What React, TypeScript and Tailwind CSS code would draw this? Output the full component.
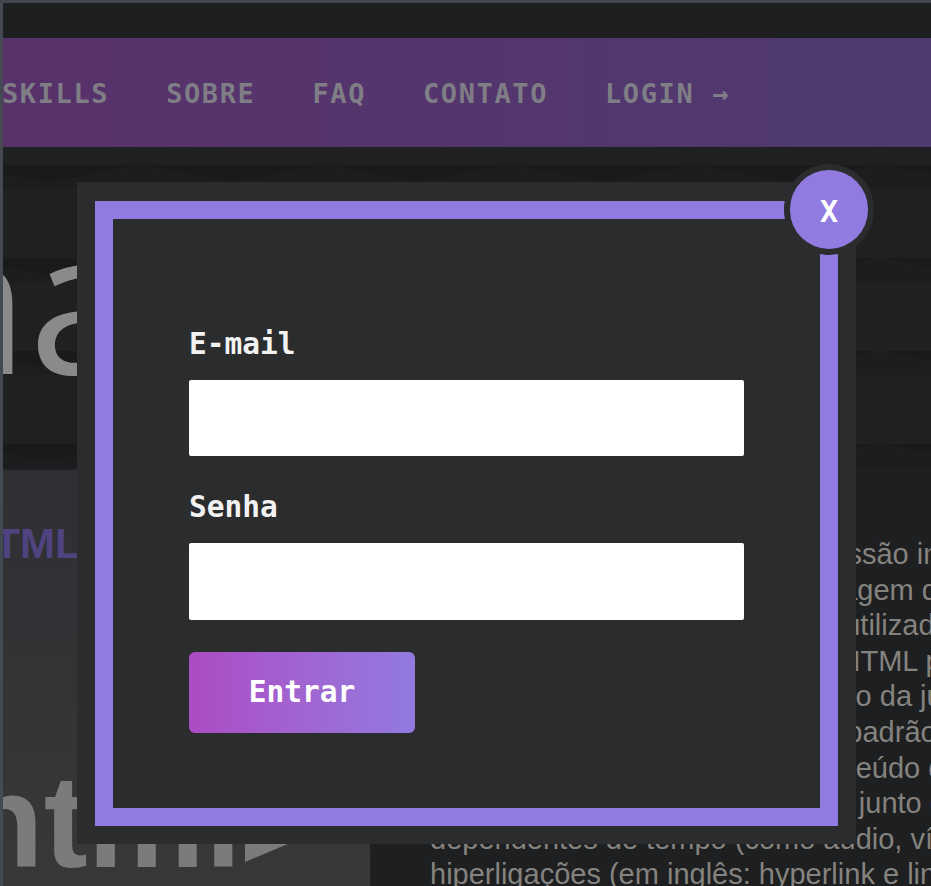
const navItems = ["SKILLS", "SOBRE", "FAQ", "CONTATO", "LOGIN →"];

// only the part right of the modal shows, the line breaks keep the words in the right spot
const paragraph = [
  "HTML, (abreviação para a expressão inglesa",
  "A Language, que significa Linguagem de",
  "de Hipertexto) é uma marcação utilizada",
  "na construção de páginas web. HTML podem",
  "ser interpretada. tecnologia é fruto da junção",
  "entre padrões HyTime e SGML. padrão",
  "redes para apresentação do conteúdo da",
  "da página, que é sempre exibido junto de",
  "dependentes de tempo (como áudio, vídeo",
  "hiperligações (em inglês: hyperlink e links)",
];

function HeroPattern() {
  return (
    <svg className="absolute inset-0 h-full w-full" aria-hidden="true">
      <defs>
        <pattern id="zigzag" x="45" y="18" width="185" height="93" patternUnits="userSpaceOnUse">
          <rect width="185" height="93" fill="#1f2021" />
          <polygon points="0,0 185,0 185,18 92,0 0,18" fill="#191a1b" />
          <polygon points="0,18 92,0 185,18 185,24 0,24" fill="#1c1d1e" />
        </pattern>
      </defs>
      <rect width="100%" height="100%" fill="url(#zigzag)" />
    </svg>
  );
}

function LoginModal() {
  return (
    <div className="absolute left-[77px] top-[182px] h-[662px] w-[779px] bg-[#2b2c2e] px-[18px] pb-[18px] pt-[19px]">
      <div className="h-full border-[18px] border-[#917ae0] px-[76px] pt-[108px] font-['DejaVu_Sans_Mono',monospace] text-[29.5px] font-bold text-[#f2f2f2]">
        <form className="flex flex-col items-start">
          <label className="leading-[34px]">E-mail</label>
          <input type="text" className="mt-[19px] h-[76px] w-[555px] rounded-[2px] bg-white" />
          <label className="mt-[34px] leading-[34px]">Senha</label>
          <input type="password" className="mt-[19px] h-[77px] w-[555px] rounded-[2px] bg-white" />
          <button
            type="button"
            className="mt-[32px] h-[81px] w-[226px] rounded-[6px] bg-gradient-to-r from-[#ac4bc3] to-[#917ae0] text-white"
          >
            Entrar
          </button>
        </form>
      </div>
      <button
        type="button"
        className="absolute left-[713px] top-[-12px] flex h-[79px] w-[78px] items-center justify-center rounded-full bg-[#917ae0] pt-[3px] font-['DejaVu_Sans_Mono',monospace] text-[30px] font-bold text-white shadow-[0_0_0_6px_#2b2c2e]"
      >
        X
      </button>
    </div>
  );
}

export default function App() {
  return (
    <div className="relative flex h-[886px] w-[931px] flex-col overflow-hidden bg-[#1e1f20]">
      <div className="h-[3px] shrink-0 bg-[#41464e]" />
      <div className="flex min-h-0 flex-1">
        <div className="w-[3px] shrink-0 bg-[#454a52]" />
        <main className="min-w-0 flex-1 overflow-hidden">
          <div className="h-[35px]" />
          <nav className="flex h-[109px] items-center gap-[57px] whitespace-nowrap bg-gradient-to-r from-[#58316a] to-[#4e3a70] pt-[4px] font-['DejaVu_Sans_Mono',monospace] text-[27px] font-bold tracking-[1.6px] text-[#7f7d85]">
            {navItems.map((item) => (
              <span key={item} className="first:-ml-px">
                {item}
              </span>
            ))}
          </nav>

          <section className="relative h-[323px] overflow-hidden">
            <HeroPattern />
            <div className="relative -ml-[97px] pt-[20px] font-['Open_Sans',sans-serif] text-[200px] font-normal leading-[260px] text-[#8a8a8a]">
              na
            </div>
          </section>

          <section className="flex h-[416px]">
            <div className="relative w-[367px] shrink-0 overflow-hidden bg-gradient-to-b from-[#2f2f34] to-[#383838]">
              <h2 className="-ml-[39px] mt-[50px] font-['Liberation_Sans',sans-serif] text-[42px] font-bold leading-[48px] text-[#4f4380]">
                HTML
              </h2>
              <div className="-ml-[40px] mt-[169px] font-['Liberation_Sans',sans-serif] text-[132px] font-bold leading-[170px] text-[#7b7b7b]">
                html
              </div>
              <svg className="absolute left-[242px] top-[368px]" width="60" height="24" viewBox="0 0 60 24" aria-hidden="true">
                <polygon points="0,0 57,0 0,24" fill="#7b7b7b" />
              </svg>
            </div>
            <div className="flex-1 overflow-hidden pl-[60px] pt-[67px] font-['Liberation_Sans',sans-serif] text-[29px] leading-[35.6px] whitespace-nowrap text-[#85837f]">
              {paragraph.map((line) => (
                <div key={line}>{line}</div>
              ))}
            </div>
          </section>
        </main>
      </div>
      <LoginModal />
    </div>
  );
}
